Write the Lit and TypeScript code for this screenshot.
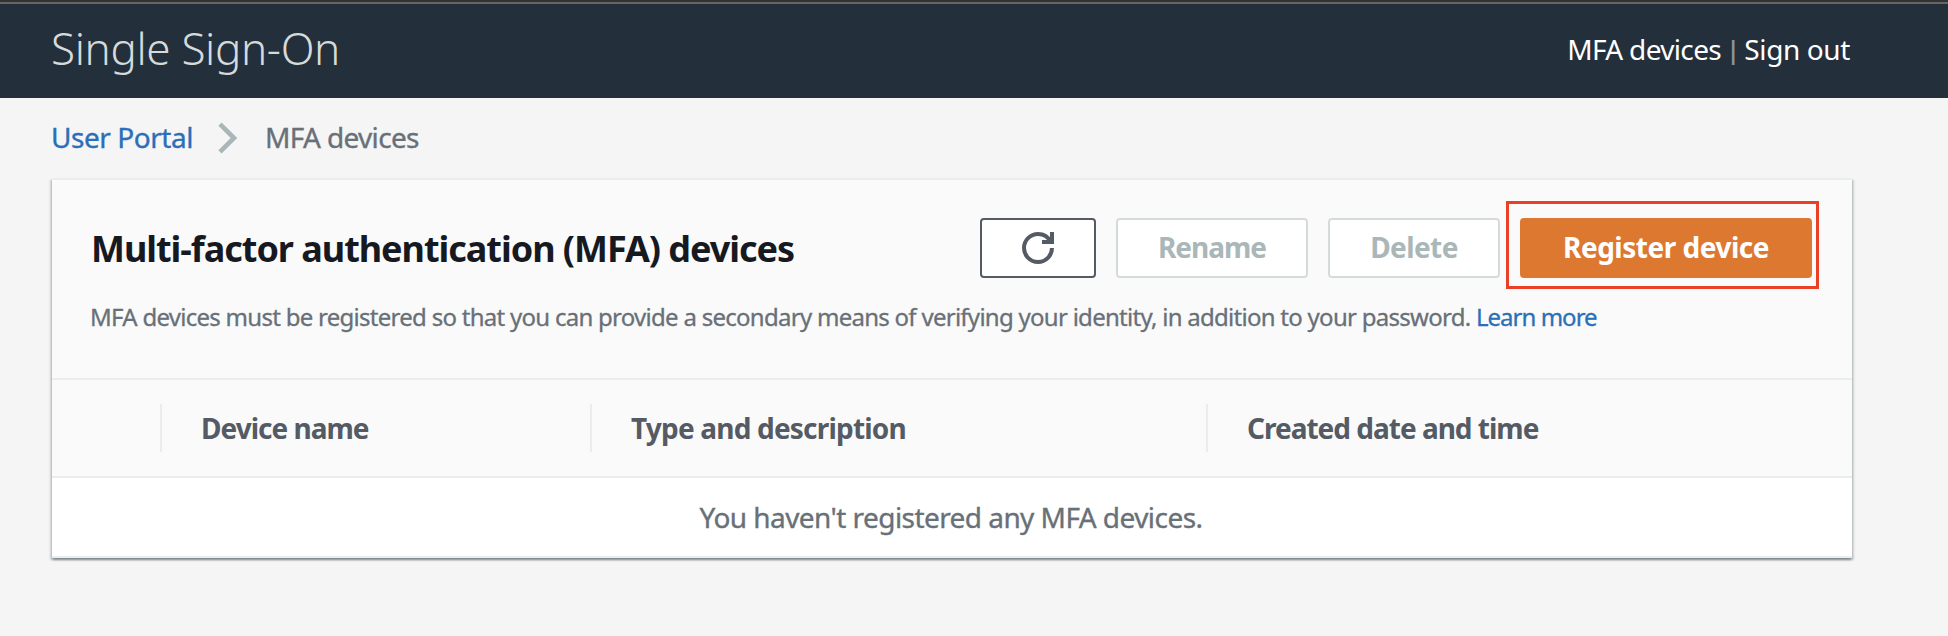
import { LitElement, html, css } from "lit";
import { customElement } from "lit/decorators.js";

@customElement("app-header")
class AppHeader extends LitElement {
  static styles = css`
    :host { display: block; }
    .bar {
      box-sizing: border-box; height: 98px; display: flex; justify-content: space-between; align-items: center;
      padding: 0 98px 0 51px; background: #242f3c; color: #fff;
      border-top: 2px solid #333; box-shadow: inset 0 2px 0 #666;
    }
    .title { font-size: 44px; font-weight: 280; line-height: 60px; letter-spacing: -0.35px; color: #d5dbdb; padding-bottom: 5px; }
    .links { display: flex; align-items: center; font-size: 28px; line-height: 40px; padding-bottom: 2px; }
    .mfa { letter-spacing: -0.66px; margin-right: 5px; }
    .sep { font-size: 26px; font-weight: 600; color: #8d949b; margin-right: 4px; }
    .out { letter-spacing: -0.39px; }
  `;
  render() {
    return html`<header class="bar">
      <div class="title">Single Sign-On</div>
      <nav class="links"><span class="mfa">MFA devices</span><span class="sep">|</span><span class="out">Sign out</span></nav>
    </header>`;
  }
}

@customElement("app-breadcrumb")
class AppBreadcrumb extends LitElement {
  static styles = css`
    :host { display: block; }
    .crumbs { display: flex; align-items: center; padding: 19px 51px 21px; height: 40px; font-size: 28px; line-height: 40px; -webkit-text-stroke-width: 0.35px; }
    .link { color: #2b6fb8; letter-spacing: -0.45px; width: 167px; }
    .chev { width: 20px; height: 32px; margin: 2px 27px 0 0; fill: none; stroke: #aab7b8; stroke-width: 4.6; }
    .here { color: #687078; letter-spacing: -0.66px; }
  `;
  render() {
    return html`<div class="crumbs">
      <span class="link">User Portal</span>
      <svg class="chev" viewBox="0 0 20 32"><path d="M2 2.2 16 16 2 29.8" /></svg>
      <span class="here">MFA devices</span>
    </div>`;
  }
}

@customElement("mfa-devices")
class MfaDevices extends LitElement {
  static styles = css`
    :host { display: block; }
    .card {
      box-sizing: border-box; width: 1800px; margin-left: 52px; background: #fff; border-top: 2px solid #eaeded;
      box-shadow: 0 2px 2px 0 rgba(0,28,36,.3), 2px 2px 2px 0 rgba(0,28,36,.15), -2px 2px 2px 0 rgba(0,28,36,.15);
    }
    .head { background: #fafafa; border-bottom: 2px solid #eaeded; padding: 38px 40px 45px 39px; }
    .row { display: flex; align-items: center; justify-content: space-between; height: 60px; }
    h2 { margin: 0; padding-top: 2px; font-size: 36px; font-weight: 700; line-height: 48px; letter-spacing: -1.03px; color: #16191f; white-space: nowrap; }
    .actions { display: flex; gap: 20px; }
    .btn {
      box-sizing: border-box; height: 60px; display: flex; align-items: center; justify-content: center; position: relative;
      font: inherit; font-size: 28px; font-weight: 700; line-height: 40px; margin: 0; padding: 0 0 2px; white-space: nowrap;
      background: #fff; border: 2px solid #d5dbdb; border-radius: 4px; color: #aab7b8;
    }
    .refresh { width: 116px; border-color: #545b64; padding: 0; }
    .refresh svg { width: 32px; height: 32px; fill: none; stroke: #545b64; stroke-width: 2; }
    .rename { width: 192px; letter-spacing: -1px; }
    .delete { width: 172px; letter-spacing: -0.6px; }
    .register { width: 292px; letter-spacing: -0.49px; background: #dd7831; border-color: #dd7831; color: #fff; }
    .callout { position: absolute; top: -19px; right: -9px; bottom: -13px; left: -16px; border: 3px solid #ea4025; }
    .desc { margin: 23px 0 0 -1px; font-size: 24px; line-height: 32px; letter-spacing: -0.725px; color: #687078; white-space: nowrap; -webkit-text-stroke-width: 0.3px; }
    .desc .more { color: #2b6fb8; letter-spacing: -0.98px; }
    .cols { display: grid; grid-template-columns: 110px 430px 616px 1fr; align-items: center; height: 96px; background: #fafafa; border-bottom: 2px solid #eaeded; }
    .col { box-sizing: border-box; height: 48px; border-right: 2px solid #eaeded; font-size: 28px; font-weight: 700; line-height: 48px; color: #545b64; padding-left: 39px; letter-spacing: -1px; }
    .col.type { letter-spacing: -0.8px; }
    .col.last { border-right: 0; }
    .empty { height: 78px; line-height: 78px; text-align: center; font-size: 28px; letter-spacing: -0.56px; color: #687078; border-bottom: 2px solid #eaeded; padding-right: 2px; -webkit-text-stroke-width: 0.35px; }
  `;
  render() {
    return html`<section class="card">
      <div class="head">
        <div class="row">
          <h2>Multi-factor authentication (MFA) devices</h2>
          <div class="actions">
            <button class="btn refresh" aria-label="Refresh">
              <svg viewBox="0 0 16 16"><path d="M15 8a7 7 0 1 1-7-7c2.8 0 5.2 1.6 6.3 4M10 5h5M15 0v6" /></svg>
            </button>
            <button class="btn rename">Rename</button>
            <button class="btn delete">Delete</button>
            <button class="btn register">Register device<span class="callout"></span></button>
          </div>
        </div>
        <p class="desc">MFA devices must be registered so that you can provide a secondary means of verifying your identity, in addition to your password. <span class="more">Learn more</span></p>
      </div>
      <div class="cols">
        <div class="col"></div>
        <div class="col">Device name</div>
        <div class="col type">Type and description</div>
        <div class="col last">Created date and time</div>
      </div>
      <div class="empty">You haven't registered any MFA devices.</div>
    </section>`;
  }
}

@customElement("app-root")
class AppRoot extends LitElement {
  static styles = css`
    :host { display: block; min-height: 636px; background: #f5f5f5; font-family: "Noto Sans", "Open Sans", sans-serif; overflow: hidden; }
  `;
  render() {
    return html`<app-header></app-header><app-breadcrumb></app-breadcrumb><mfa-devices></mfa-devices>`;
  }
}
